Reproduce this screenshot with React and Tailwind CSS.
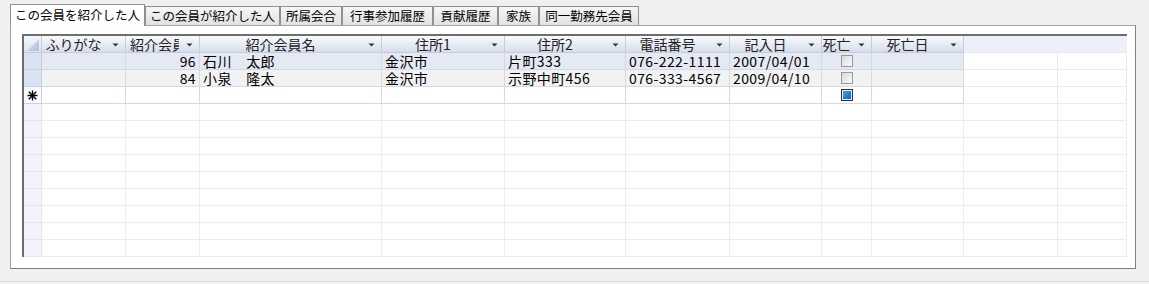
import React from "react";

const W = [
  "w-[18px]",
  "w-[84px]",
  "w-[74px]",
  "w-[182px]",
  "w-[123px]",
  "w-[121px]",
  "w-[104px]",
  "w-[92px]",
  "w-[50px]",
  "w-[92px]",
  "w-[94px]",
  "w-[69px]",
];

const LABELS = [
  null,
  "ふりがな",
  "紹介会員番号",
  "紹介会員名",
  "住所1",
  "住所2",
  "電話番号",
  "記入日",
  "死亡",
  "死亡日",
  null,
  null,
];

const TABS = [
  { label: "この会員を紹介した人", w: "w-[135px]", active: true },
  { label: "この会員が紹介した人", w: "w-[135px]" },
  { label: "所属会合", w: "w-[62px]" },
  { label: "行事参加履歴", w: "w-[91px]" },
  { label: "貢献履歴", w: "w-[65px]" },
  { label: "家族", w: "w-[41px]" },
  { label: "同一勤務先会員", w: "w-[100px]" },
];

const ROWS = [
  { no: "96", name: "石川\u3000太郎", a1: "金沢市", a2: "片町333", tel: "076-222-1111", date: "2007/04/01" },
  { no: "84", name: "小泉\u3000隆太", a1: "金沢市", a2: "示野中町456", tel: "076-333-4567", date: "2009/04/10" },
];

function Arrow() {
  return (
    <svg width="7" height="4" viewBox="0 0 7 4" className="mt-[2px]">
      <path d="M0.5 0.5 L6.5 0.5 L3.5 3.5 Z" fill="#333" />
    </svg>
  );
}

function Asterisk() {
  return (
    <svg width="11" height="11" viewBox="0 0 11 11">
      <g stroke="#000" strokeWidth="1.4">
        <line x1="5.5" y1="0.5" x2="5.5" y2="10.5" />
        <line x1="0.5" y1="5.5" x2="10.5" y2="5.5" />
        <line x1="1.8" y1="1.8" x2="9.2" y2="9.2" />
        <line x1="9.2" y1="1.8" x2="1.8" y2="9.2" />
      </g>
    </svg>
  );
}

function Corner() {
  return (
    <svg width="12" height="12" viewBox="0 0 12 12">
      <defs>
        <linearGradient id="cg" x1="0" y1="0" x2="1" y2="1">
          <stop offset="0" stopColor="#dfe8f5" />
          <stop offset="1" stopColor="#a9bfdf" />
        </linearGradient>
      </defs>
      <path d="M12 0 L12 12 L0 12 Z" fill="url(#cg)" />
    </svg>
  );
}

function CheckBox({ filled }) {
  if (filled) {
    return (
      <div className="w-[12px] h-[12px] border border-[#1d3552] bg-[#e6eef7] p-[1px]">
        <div className="w-full h-full bg-gradient-to-br from-[#4aa3e0] to-[#1b5f9c]" />
      </div>
    );
  }
  return (
    <div className="w-[12px] h-[12px] border border-[#9a9a9a] bg-gradient-to-br from-[#d9d9d9] to-[#fbfbfb]" />
  );
}

function HeaderCell({ i }) {
  const label = LABELS[i];
  if (i === 0) {
    return (
      <div className={`${W[i]} h-[17px] shrink-0 flex items-end justify-end pr-[2px] pb-[1px] border-r border-b border-[#c5cdda] bg-gradient-to-b from-[#f4f7fb] to-[#dbe3ef]`}>
        <Corner />
      </div>
    );
  }
  if (!label) {
    return (
      <div className={`${W[i]} h-[17px] shrink-0 bg-[#eef0f9] border-b border-[#e6e8f2]`} />
    );
  }
  const clip = i === 2;
  return (
    <div className={`${W[i]} h-[17px] shrink-0 flex items-center border-r border-b border-[#c5cdda] bg-gradient-to-b from-[#f9fbfd] to-[#d6deeb] text-[#222]`}>
      {clip ? (
        <div className="flex-1 min-w-0 overflow-hidden whitespace-nowrap text-left pl-[4px]">{label}</div>
      ) : (
        <div className="flex-1 min-w-0 whitespace-nowrap text-center">{label}</div>
      )}
      <div className="w-[20px] shrink-0 flex justify-center">
        <Arrow />
      </div>
    </div>
  );
}

function DataRow({ row, idx }) {
  const bg = idx === 0 ? "bg-[#e4e9f3]" : "bg-[#f2f2f2]";
  const line = "border-r border-b border-[#d3d9e3]";
  const cell = `h-[17px] shrink-0 whitespace-nowrap ${line} ${bg}`;
  return (
    <div className="flex">
      <div className={`${W[0]} h-[17px] shrink-0 bg-[#dae3f2] border-r border-b border-[#c6d0e0]`} />
      <div className={`${W[1]} ${cell}`} />
      <div className={`${W[2]} ${cell} text-right pr-[3px]`}>{row.no}</div>
      <div className={`${W[3]} ${cell} pl-[3px]`}>{row.name}</div>
      <div className={`${W[4]} ${cell} pl-[3px]`}>{row.a1}</div>
      <div className={`${W[5]} ${cell} pl-[3px]`}>{row.a2}</div>
      <div className={`${W[6]} ${cell} pl-[3px]`}>{row.tel}</div>
      <div className={`${W[7]} ${cell} pl-[3px]`}>{row.date}</div>
      <div className={`${W[8]} ${cell} flex items-center justify-center`}>
        <CheckBox />
      </div>
      <div className={`${W[9]} ${cell}`} />
      <div className={`${W[10]} h-[17px] shrink-0 border-r border-b border-[#ebebeb] bg-white`} />
      <div className={`${W[11]} h-[17px] shrink-0 border-r border-b border-[#ebebeb] bg-white`} />
    </div>
  );
}

function NewRow() {
  const cell = "h-[17px] shrink-0 border-r border-b border-[#d3d9e3] bg-white";
  return (
    <div className="flex">
      <div className={`${W[0]} h-[17px] shrink-0 bg-[#fbfbfd] border-r border-b border-[#c6d0e0] flex items-center justify-center`}>
        <Asterisk />
      </div>
      <div className={`${W[1]} ${cell}`} />
      <div className={`${W[2]} ${cell}`} />
      <div className={`${W[3]} ${cell}`} />
      <div className={`${W[4]} ${cell}`} />
      <div className={`${W[5]} ${cell}`} />
      <div className={`${W[6]} ${cell}`} />
      <div className={`${W[7]} ${cell}`} />
      <div className={`${W[8]} ${cell} flex items-center justify-center`}>
        <CheckBox filled />
      </div>
      <div className={`${W[9]} ${cell}`} />
      <div className={`${W[10]} h-[17px] shrink-0 border-r border-b border-[#ebebeb] bg-white`} />
      <div className={`${W[11]} h-[17px] shrink-0 border-r border-b border-[#ebebeb] bg-white`} />
    </div>
  );
}

function EmptyRow() {
  return (
    <div className="flex">
      <div className={`${W[0]} h-[17px] shrink-0 bg-[#f3f3fd] border-r border-b border-[#e6e6f0]`} />
      {W.slice(1).map((w, j) => (
        <div key={j} className={`${w} h-[17px] shrink-0 border-r border-b border-[#ececec] bg-white`} />
      ))}
    </div>
  );
}

export default function App() {
  return (
    <div className="w-[1149px] h-[284px] bg-[#f0f0f0] font-['Noto_Sans_CJK_JP',sans-serif] text-black overflow-hidden">
      <div className="h-[282px] border-b border-[#d9d9d9]">
        {/* tab strip */}
        <div className="h-[25px] pl-[10px] flex items-end relative z-10">
          {TABS.map((t) =>
            t.active ? (
              <div
                key={t.label}
                className={`${t.w} h-[22px] -mb-px bg-white border border-b-0 border-[#8f9095] flex items-center justify-center text-[12.5px] leading-none whitespace-nowrap`}
              >
                {t.label}
              </div>
            ) : (
              <div
                key={t.label}
                className={`${t.w} h-[19px] bg-gradient-to-b from-[#f7f7f7] to-[#e1e1e1] border border-b-0 border-[#8f9095] flex items-center justify-center text-[12.5px] leading-none whitespace-nowrap`}
              >
                {t.label}
              </div>
            )
          )}
        </div>
        {/* panel */}
        <div className="ml-[10px] w-[1126px] h-[244px] bg-white border border-[#a3a3a3] border-r-[#7f7f7f] border-b-[#7f7f7f]">
          <div className="ml-[11px] mt-[8px] w-[1105px] border-l-2 border-t-2 border-[#6e6e6e] text-[14px] leading-[17px] tracking-[0.4px]">
            <div className="flex tracking-normal">
              {W.map((_, i) => (
                <HeaderCell key={i} i={i} />
              ))}
            </div>
            {ROWS.map((r, idx) => (
              <DataRow key={idx} row={r} idx={idx} />
            ))}
            <NewRow />
            {Array.from({ length: 9 }).map((_, k) => (
              <EmptyRow key={k} />
            ))}
          </div>
        </div>
      </div>
    </div>
  );
}
